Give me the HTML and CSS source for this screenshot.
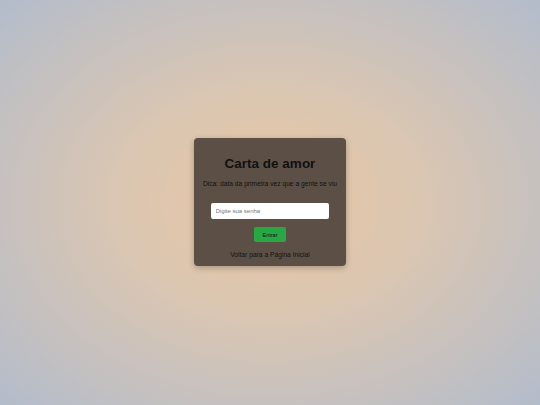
FILE: index.html
```html
<!DOCTYPE html>
<html lang="pt">
<head>
<meta charset="utf-8">
<title>Carta de amor</title>
<link rel="stylesheet" href="styles.css">
</head>
<body>
<div class="card">
  <h1 class="title">Carta de amor</h1>
  <p class="hint">Dica: data da primeira vez que a gente se viu</p>
  <input class="password" type="password" placeholder="Digite sua senha">
  <button class="enter">Entrar</button>
  <a class="back" href="#">Voltar para a Página Inicial</a>
</div>
</body>
</html>
```

FILE: styles.css
```css
html, body {
  margin: 0;
  height: 100%;
}
body {
  font-family: "Liberation Sans", Arial, sans-serif;
  background: radial-gradient(ellipse farthest-corner at 50% 50%, #eac6a4 0%, #dac6b2 40%, #b3bccb 100%);
  display: flex;
  align-items: center;
  justify-content: center;
}
.card {
  width: 152px;
  height: 128px;
  box-sizing: border-box;
  padding: 17px 0 0;
  margin-top: -1px;
  background: #5c5046;
  border-radius: 4px;
  box-shadow: 0 2px 6px rgba(0,0,0,0.25);
  display: flex;
  flex-direction: column;
  align-items: center;
  color: #111;
}
.title {
  font-size: 13.5px;
  font-weight: bold;
  margin: 0;
  line-height: 18px;
}
.hint {
  font-size: 6.7px;
  margin: 6px 0 0;
  line-height: 9px;
}
.password {
  margin-top: 15px;
  width: 118px;
  height: 16px;
  box-sizing: border-box;
  border: none;
  border-radius: 2px;
  background: #fff;
  padding: 0 4.5px;
  font-family: inherit;
  font-size: 6px;
  outline: none;
}
.password::placeholder {
  color: #777;
}
.enter {
  margin-top: 8.3px;
  width: 32px;
  height: 15px;
  border: none;
  border-radius: 2px;
  background: #28a745;
  color: #111;
  font-family: inherit;
  font-size: 5.5px;
  padding: 0;
}
.back {
  margin-top: 7.3px;
  font-size: 6.7px;
  line-height: 10px;
  color: #111;
  text-decoration: none;
}
```
